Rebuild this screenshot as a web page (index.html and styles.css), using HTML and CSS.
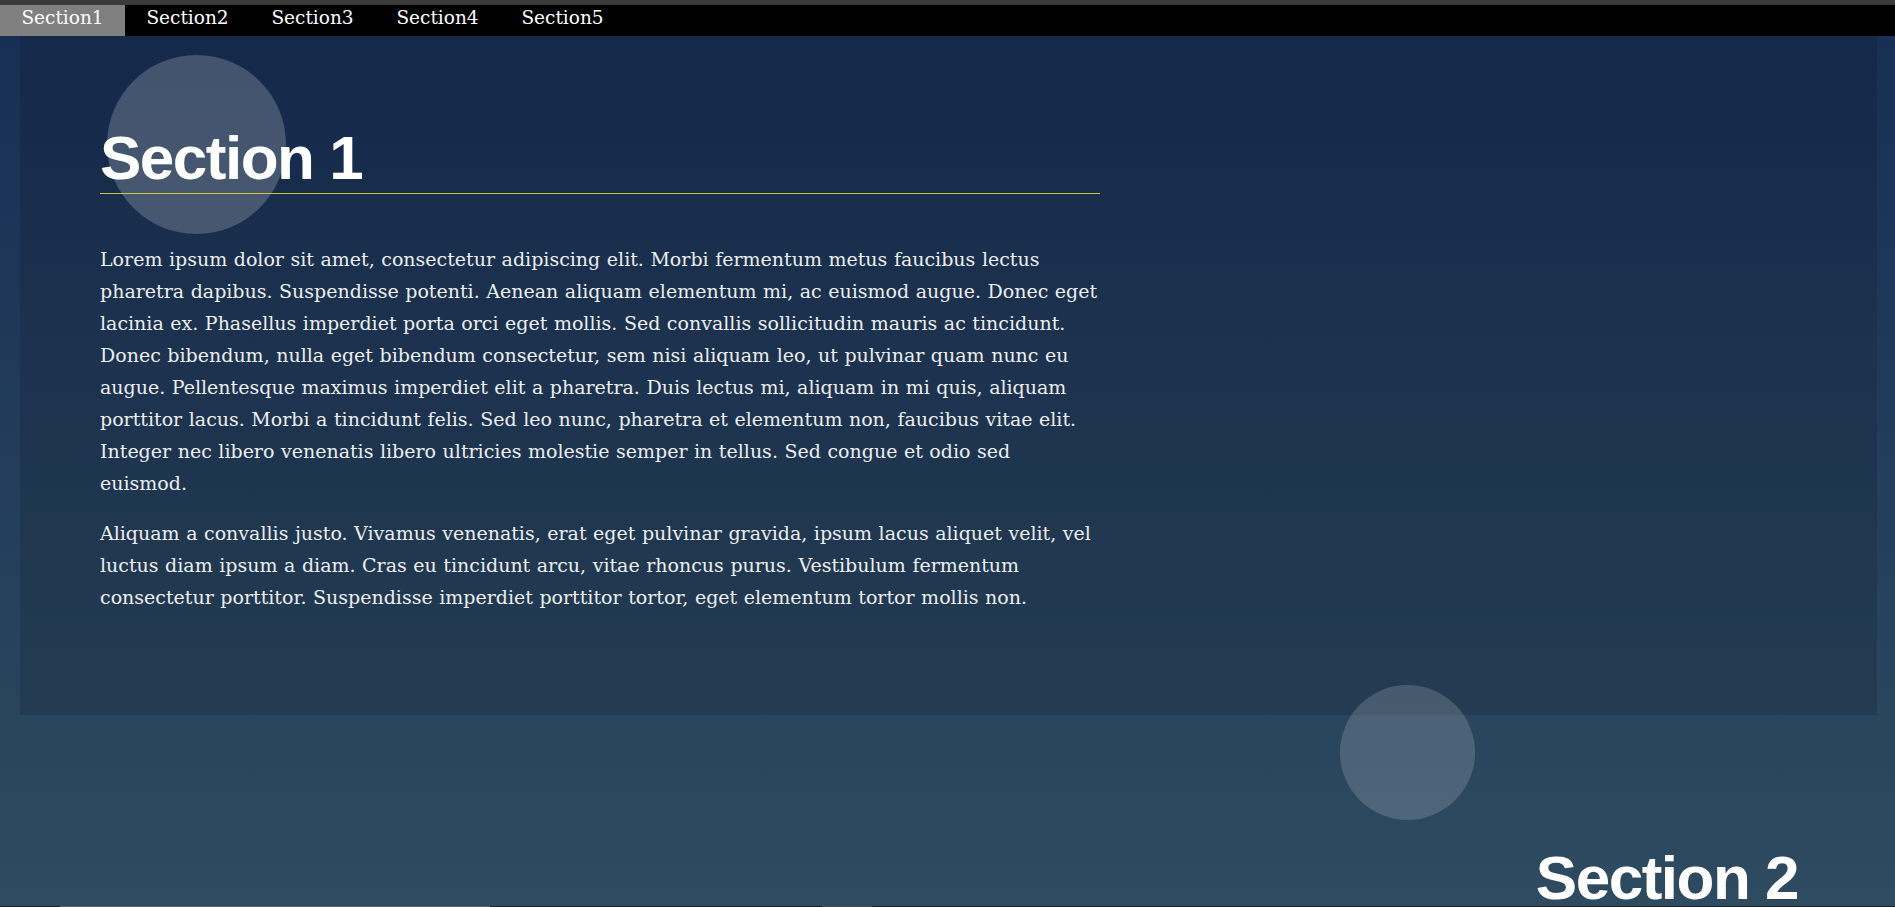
FILE: index.html
```html
<!DOCTYPE html>
<html lang="en">
<head>
<meta charset="utf-8">
<title>Sections</title>
<link rel="stylesheet" href="styles.css">
</head>
<body>
<nav class="topnav">
  <a class="nav-link active" href="#s1">Section1</a>
  <a class="nav-link" href="#s2">Section2</a>
  <a class="nav-link" href="#s3">Section3</a>
  <a class="nav-link" href="#s4">Section4</a>
  <a class="nav-link" href="#s5">Section5</a>
</nav>
<main class="page">
  <section class="sec sec-boxed" id="s1">
    <span class="bubble bubble-1"></span>
    <h1 class="sec-title">Section 1</h1>
    <p class="sec-text">Lorem ipsum dolor sit amet, consectetur adipiscing elit. Morbi fermentum metus faucibus lectus pharetra dapibus. Suspendisse potenti. Aenean aliquam elementum mi, ac euismod augue. Donec eget lacinia ex. Phasellus imperdiet porta orci eget mollis. Sed convallis sollicitudin mauris ac tincidunt. Donec bibendum, nulla eget bibendum consectetur, sem nisi aliquam leo, ut pulvinar quam nunc eu augue. Pellentesque maximus imperdiet elit a pharetra. Duis lectus mi, aliquam in mi quis, aliquam porttitor lacus. Morbi a tincidunt felis. Sed leo nunc, pharetra et elementum non, faucibus vitae elit. Integer nec libero venenatis libero ultricies molestie semper in tellus. Sed congue et odio sed euismod.</p>
    <p class="sec-text">Aliquam a convallis justo. Vivamus venenatis, erat eget pulvinar gravida, ipsum lacus aliquet velit, vel luctus diam ipsum a diam. Cras eu tincidunt arcu, vitae rhoncus purus. Vestibulum fermentum consectetur porttitor. Suspendisse imperdiet porttitor tortor, eget elementum tortor mollis non.</p>
  </section>
  <section class="sec sec-right" id="s2">
    <span class="bubble bubble-2"></span>
    <h1 class="sec-title">Section 2</h1>
  </section>
</main>
<div class="bottom-strip">
  <span class="strip-gap strip-gap-a"></span>
  <span class="strip-seg strip-seg-a"></span>
  <span class="strip-gap strip-gap-b"></span>
  <span class="strip-seg strip-seg-b"></span>
</div>
</body>
</html>
```

FILE: styles.css
```css
html, body {
  margin: 0;
  padding: 0;
}

body {
  background: #2e4b60;
  font-family: "DejaVu Serif", "Liberation Serif", serif;
  color: #eceef1;
  overflow: hidden;
}

.topnav {
  display: flex;
  height: 31px;
  background: #000;
  border-top: 5px solid #3b3b3b;
}

.nav-link {
  display: block;
  width: 125px;
  height: 31px;
  box-sizing: border-box;
  padding-bottom: 5px;
  text-align: center;
  font-size: 18.5px;
  line-height: 26px;
  color: #fff;
  text-decoration: none;
}

.nav-link.active {
  background: #808080;
}

.page {
  background: linear-gradient(180deg, #182f55 0px, #2e4b60 871px);
  min-height: 871px;
}

.sec {
  position: relative;
}

.sec-boxed {
  margin: 0 18px 0 20px;
  padding: 86px 80px 84px 80px;
  background: rgba(0, 0, 0, 0.12);
}

.sec-boxed .sec-title {
  width: 1000px;
  margin-bottom: 49px;
}

.sec-boxed .sec-text {
  width: 1000px;
}

.sec-title {
  margin: 0 0 51px 0;
  font-family: "Liberation Sans", Arial, sans-serif;
  font-weight: 700;
  font-size: 62px;
  line-height: 71px;
  letter-spacing: -1.5px;
  color: #fff;
  border-bottom: 1px solid #c5c93c;
  position: relative;
}

.sec-text {
  margin: 0 0 18px 0;
  font-size: 19px;
  line-height: 32px;
  word-spacing: 0.5px;
  position: relative;
}

.sec-right {
  padding: 127px 97px 0 0;
  display: flex;
  flex-direction: column;
  align-items: flex-end;
}

.sec-right .sec-title {
  text-align: right;
}

.bubble {
  position: absolute;
  border-radius: 50%;
  background: rgba(255, 255, 255, 0.2);
}

.bubble-1 {
  width: 179px;
  height: 179px;
  left: 87px;
  top: 19px;
}

.bubble-2 {
  width: 135px;
  height: 135px;
  left: 1340px;
  top: -30px;
  background: rgba(255, 255, 255, 0.16);
}

.bottom-strip {
  position: fixed;
  left: 0;
  right: 0;
  bottom: 0;
  height: 1px;
  display: flex;
  background: #1d1f21;
}

.strip-gap-a { width: 60px; }
.strip-seg-a { width: 430px; background: #5f6366; }
.strip-gap-b { width: 332px; }
.strip-seg-b { width: 50px; background: #4a4d50; }
```
